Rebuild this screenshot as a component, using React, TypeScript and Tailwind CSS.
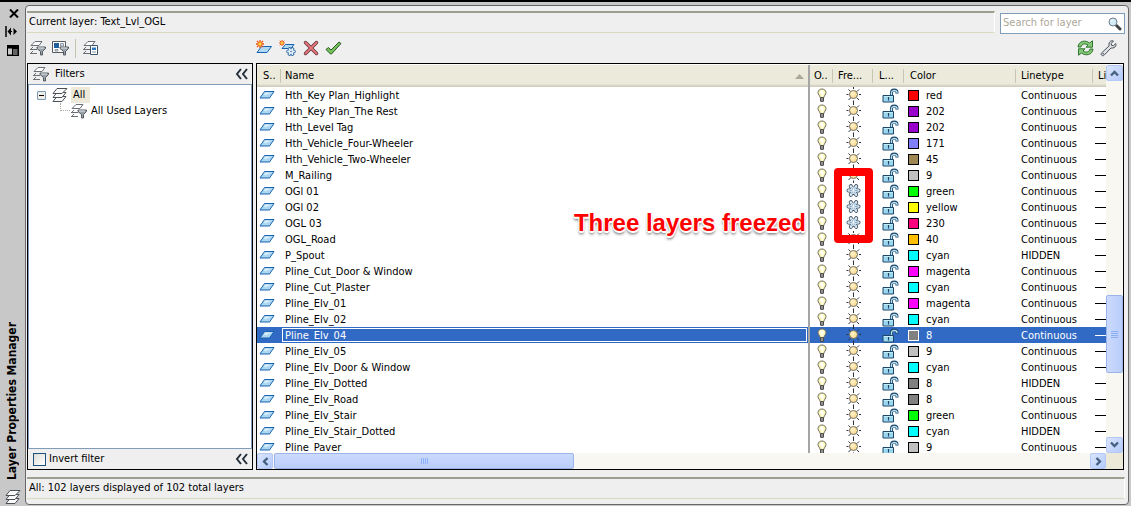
import type { ReactNode } from "react";

type Layer = { name: string; color: string; hex: string; hidden?: boolean; frozen?: boolean; selected?: boolean };

const layers: Layer[] = [
  { name: "Hth_Key Plan_Highlight", color: "red", hex: "#ff0000" },
  { name: "Hth_Key Plan_The Rest", color: "202", hex: "#9900cc" },
  { name: "Hth_Level Tag", color: "202", hex: "#9900cc" },
  { name: "Hth_Vehicle_Four-Wheeler", color: "171", hex: "#7f7fff" },
  { name: "Hth_Vehicle_Two-Wheeler", color: "45", hex: "#9e8752" },
  { name: "M_Railing", color: "9", hex: "#c0c0c0" },
  { name: "OGl 01", color: "green", hex: "#00ff00", frozen: true },
  { name: "OGl 02", color: "yellow", hex: "#ffff00", frozen: true },
  { name: "OGL 03", color: "230", hex: "#ff007f", frozen: true },
  { name: "OGL_Road", color: "40", hex: "#ffbf00" },
  { name: "P_Spout", color: "cyan", hex: "#00ffff", hidden: true },
  { name: "Pline_Cut_Door & Window", color: "magenta", hex: "#ff00ff" },
  { name: "Pline_Cut_Plaster", color: "cyan", hex: "#00ffff" },
  { name: "Pline_Elv_01", color: "magenta", hex: "#ff00ff" },
  { name: "Pline_Elv_02", color: "cyan", hex: "#00ffff" },
  { name: "Pline_Elv_04", color: "8", hex: "#808080", selected: true },
  { name: "Pline_Elv_05", color: "9", hex: "#c0c0c0" },
  { name: "Pline_Elv_Door & Window", color: "cyan", hex: "#00ffff" },
  { name: "Pline_Elv_Dotted", color: "8", hex: "#808080", hidden: true },
  { name: "Pline_Elv_Road", color: "8", hex: "#808080" },
  { name: "Pline_Elv_Stair", color: "green", hex: "#00ff00" },
  { name: "Pline_Elv_Stair_Dotted", color: "cyan", hex: "#00ffff", hidden: true },
  { name: "Pline_Paver", color: "9", hex: "#c0c0c0" },
];

function SheetIcon() {
  return (
    <svg width="16" height="8" viewBox="0 0 16 8" className="block">
      <path d="M5.5 .5H15L10.5 7H1Z" fill="#add5ee" stroke="#1463b4" />
      <path d="M6.5 1.5H12L8 4H4.5Z" fill="#d6ebf8" />
    </svg>
  );
}

function BulbIcon() {
  return (
    <svg width="10" height="15" viewBox="0 0 10 15" className="block">
      <path d="M5 1C2.700 1 1 2.500 1 4.700 1 6.700 3 7.500 3 9.500H7C7 7.500 9 6.700 9 4.700 9 2.500 7.300 1 5 1Z" fill="#fdf8bf" stroke="#716c58" />
      <path d="M3 2.500H6.500V6L5.500 8.500H4.500V6L3 5Z" fill="#fffef0" />
      <path d="M3 9.500H7V13L6 14H4L3 13Z" fill="#4c4c4c" />
      <path d="M4.500 10H5.500V13H4.500Z" fill="#d4d4d4" />
    </svg>
  );
}

function SunIcon() {
  return (
    <svg width="16" height="16" viewBox="0 0 16 16" className="block">
      <path d="M7.500 0V2M7.500 13.500V16M.5 7.500H2.500M13 7.500H15M2.500 2.500L4.500 4.500M11 11L13 13M2.500 13L4.500 11M11 4.500L13 2.500" stroke="#2e3238" />
      <circle cx="7.500" cy="7.500" r="4" fill="#fbe2a0" stroke="#6e6a60" />
      <circle cx="6.500" cy="6.500" r="2" fill="#fff0c4" />
    </svg>
  );
}

function SnowIcon() {
  return (
    <svg width="16" height="16" viewBox="0 0 16 16" className="block">
      <path d="M2.500 7.500H12.500M4.800 3.200L10.200 11.800M10.200 3.200L4.800 11.800" stroke="#3c4b5a" strokeWidth="4" strokeLinecap="round" />
      <path d="M2.500 7.500H12.500M4.800 3.200L10.200 11.800M10.200 3.200L4.800 11.800" stroke="#d9ebf7" strokeWidth="2.400" strokeLinecap="round" />
      <circle cx="7.500" cy="7.500" r="3.200" fill="#d9ebf7" />
      <path d="M3.500 7.500H11.500M5.500 4.400L9.500 10.600M9.500 4.400L5.500 10.600" stroke="#7d9fbd" strokeWidth=".9" />
      <circle cx="7.500" cy="7.500" r="1.200" fill="#fff" />
    </svg>
  );
}

function LockIcon() {
  return (
    <svg width="17" height="15" viewBox="0 0 17 15" className="block">
      <path d="M9.500 7.500V4.500C9.500 1.200 15 1.200 15 4.500V5.500" fill="none" stroke="#1d4668" strokeWidth="3" />
      <path d="M9.500 8V4.500C9.500 1.800 15 1.800 15 4.500V5" fill="none" stroke="#b4e0f4" strokeWidth="1.300" />
      <path d="M1 7.500H11.500V14H1Z" fill="#9bd8f0" stroke="#1d4668" />
      <path d="M2 8.500H10.500" stroke="#c8ecf8" />
      <path d="M6.500 9V12.500" stroke="#1d4668" strokeWidth="1.200" />
    </svg>
  );
}

function LayersIcon() {
  return (
    <svg width="16" height="16" viewBox="0 0 16 16" className="block">
      <g fill="#fafafa" stroke="#4c5157">
        <path d="M5 9.500L1 14.500H10L14 9.500Z" />
        <path d="M5 5.500L1 10.500H10L14 5.500Z" />
        <path d="M5 1.500L1 6.500H10L15 1.500Z" />
      </g>
    </svg>
  );
}

function Lines() {
  return (
    <g fill="none" stroke="#6a6f75">
      <path d="M2 5.500L6 1.500H13L10 5.500Z" fill="#fff" />
      <path d="M1 9.500H8M4 7L1.500 9.500M1 13.500H8M4 11L1.500 13.500" />
    </g>
  );
}

function Funnel() {
  return (
    <g>
      <path d="M8 7H16.500V8.500L13.500 11.500V15H11.500V11.500L8 8.500Z" fill="#9aa2aa" stroke="#4a5056" strokeWidth=".9" />
      <path d="M9 8H15" stroke="#dfe4e8" />
    </g>
  );
}

function FilterIcon() {
  return (
    <svg width="17" height="16" viewBox="0 0 17 16" className="block">
      <Lines />
      <Funnel />
    </svg>
  );
}

function GroupFilterIcon() {
  return (
    <svg width="17" height="16" viewBox="0 0 17 16" className="block">
      <path d="M.5 1.500H13.500V12.500H.5Z" fill="#fff" stroke="#555a60" />
      <path d="M2 3H7V8H2Z" fill="#1e5f9e" />
      <path d="M8.500 3.500H11.500V6H8.500ZM3 9.500H6V11H3Z" fill="#d8e4ee" stroke="#7a8692" strokeWidth=".8" />
      <Funnel />
    </svg>
  );
}

function StatesIcon() {
  return (
    <svg width="17" height="16" viewBox="0 0 17 16" className="block">
      <Lines />
      <path d="M9.500 5.500H15.500V14.500H8.500V5.500Z" fill="#fff" stroke="#3f5468" />
      <path d="M10 7.500H14V10H10Z" fill="#2b78c0" />
      <path d="M10 12H14" stroke="#8695a4" />
    </svg>
  );
}

function Burst() {
  return (
    <g>
      <path d="M4 0V8M0 4H8M1 1L7 7M1 7L7 1" stroke="#e8501c" strokeWidth="1.300" />
      <circle cx="4" cy="4" r="2" fill="#ffdc4a" stroke="#f0801c" />
    </g>
  );
}

function NewLayerIcon() {
  return (
    <svg width="17" height="16" viewBox="0 0 17 16" className="block">
      <path d="M5.500 6.500H15.500L11 12.500H1Z" fill="#b3d9f0" stroke="#1463b4" />
      <Burst />
    </svg>
  );
}

function NewFrozenIcon() {
  return (
    <svg width="17" height="16" viewBox="0 0 17 16" className="block">
      <path d="M6.500 4.500H15L12 8.500H3Z" fill="#b3d9f0" stroke="#1463b4" />
      <g transform="scale(.75)">
        <Burst />
      </g>
      <path d="M9 11.500H15M10.500 9L13.500 14M13.500 9L10.500 14" stroke="#2f68a0" strokeWidth="3.600" strokeLinecap="round" />
      <path d="M9 11.500H15M10.500 9L13.500 14M13.500 9L10.500 14" stroke="#eaf5fc" strokeWidth="1.800" strokeLinecap="round" />
      <circle cx="12" cy="11.500" r=".8" fill="#2f68a0" />
    </svg>
  );
}

function DeleteIcon() {
  return (
    <svg width="16" height="16" viewBox="0 0 16 16" className="block">
      <path d="M2.500 2.500L13.500 13.500M13.500 2.500L2.500 13.500" stroke="#5c3238" strokeWidth="3.400" strokeLinecap="round" />
      <path d="M2.500 2.500L13.500 13.500M13.500 2.500L2.500 13.500" stroke="#e8747c" strokeWidth="1.900" strokeLinecap="round" />
    </svg>
  );
}

function CheckIcon() {
  return (
    <svg width="17" height="16" viewBox="0 0 17 16" className="block">
      <path d="M1 9.500L3.500 7.500L6 10L14 2L16 3.500L6.500 14H5.500Z" fill="#74c05c" stroke="#2c5a22" strokeLinejoin="round" />
    </svg>
  );
}

function RefreshIcon() {
  return (
    <svg width="17" height="16" viewBox="0 0 17 16" className="block">
      <g fill="#86c878" stroke="#206a1e" strokeWidth=".9" strokeLinejoin="round">
        <path d="M1 7C1.500 1 8.500-.5 12.500 3L15.500 .8V7.200H9L11 5C8 3 4.500 4 4 7Z" />
        <path d="M16 9C15.500 15 8.500 16.300 4.500 13L1.500 15.200V8.800H8L6 11C9 13 12.500 12 13 9Z" />
      </g>
    </svg>
  );
}

function WrenchIcon() {
  return (
    <svg width="17" height="17" viewBox="0 0 17 17" className="block">
      <path d="M13.500 1C11.500.3 9 1.300 9 4 9 5 9.200 5.500 9 6L1.500 13C.3 14.800 2.500 16.600 4 15.300L11 8C12 8 13.500 8.300 15 7 16 6 16.200 4.700 15.800 3.500L13.500 5.700 11.500 5.300 11.300 3.300Z" fill="#dfe3e8" stroke="#4a5058" strokeLinejoin="round" />
      <circle cx="3.200" cy="13.800" r=".8" fill="#4a5058" />
    </svg>
  );
}

function SearchIcon() {
  return (
    <svg width="14" height="14" viewBox="0 0 14 14" className="block">
      <path d="M8.500 8.500L12 12" stroke="#3f4246" strokeWidth="3" strokeLinecap="round" />
      <circle cx="5" cy="5" r="4" fill="#d4ebf8" stroke="#70808e" />
      <path d="M3 5C3 3.800 3.800 3 5 3" stroke="#fff" fill="none" />
    </svg>
  );
}

function CollapseIcon() {
  return (
    <svg width="13" height="12" viewBox="0 0 13 12" className="block">
      <path d="M6 1L2 6L6 11M12 1L8 6L12 11" fill="none" stroke="#26303c" strokeWidth="2" />
    </svg>
  );
}

function Chevron({ d }: { d: string }) {
  return (
    <svg width="9" height="9" viewBox="0 0 9 9" className="block">
      <path d={d} fill="none" stroke="#45607f" strokeWidth="2.300" />
    </svg>
  );
}

function IconButton({ label, children }: { label: string; children: ReactNode }) {
  return (
    <button type="button" aria-label={label} className="flex h-5 w-[17px] shrink-0 items-center justify-center">
      {children}
    </button>
  );
}

function ScrollButton({ label, d, className }: { label: string; d: string; className: string }) {
  return (
    <button
      type="button"
      aria-label={label}
      className={`flex shrink-0 items-center justify-center rounded-xs border border-[#b4c8f6] bg-linear-to-br from-[#dbe5fe] to-[#b4cafb] ${className}`}
    >
      <Chevron d={d} />
    </button>
  );
}

const headings = [
  { text: "S..", pad: "pl-[6px]" },
  { text: "Name", pad: "pl-1" },
  { text: "O..", pad: "pl-1" },
  { text: "Fre...", pad: "pl-[5px]" },
  { text: "L...", pad: "pl-[6px]" },
  { text: "Color", pad: "pl-[6px]" },
  { text: "Linetype", pad: "pl-[5px]" },
  { text: "Li", pad: "pl-[5px]" },
];

function LayerRow({ layer }: { layer: Layer }) {
  return (
    <tr className={layer.selected ? "h-4 bg-[#316ac5] text-white" : "h-4"}>
      <td className="p-0 pl-[2px]"><SheetIcon /></td>
      <td className="p-0">
        <div className={layer.selected ? "mx-px h-[14px] truncate border border-white pl-[2px] leading-[14px]" : "truncate pl-1 pt-[2px] leading-[14px]"}>
          {layer.name}
        </div>
      </td>
      <td className="border-l-2 border-[#a5a5a5] p-0 pl-[7px]"><BulbIcon /></td>
      <td className="p-0 pl-[13px]">{layer.frozen ? <SnowIcon /> : <SunIcon />}</td>
      <td className="p-0 pl-[9px]"><LockIcon /></td>
      <td className="p-0 pl-1">
        <div className="flex h-4 items-center gap-[7px]">
          <span
            className={layer.selected ? "size-[11px] border border-white" : "size-[11px] border border-black"}
            style={{ backgroundColor: layer.hex }}
          />
          <span className="pt-[2px] leading-[14px]">{layer.color}</span>
        </div>
      </td>
      <td className="p-0 pl-[5px] pt-[2px] leading-[14px]">{layer.hidden ? "HIDDEN" : "Continuous"}</td>
      <td className="p-0 pl-[2px]">
        <div className={layer.selected ? "h-px bg-white" : "h-px bg-black"} />
      </td>
    </tr>
  );
}

function LayerList() {
  return (
    <section className="flex min-w-0 flex-1 flex-col border border-black bg-white pt-px">
      <div className="flex min-h-0 flex-1">
        <div className="relative min-w-0 flex-1 overflow-hidden">
          <table className="w-full table-fixed border-collapse text-left">
            <colgroup>
              <col className="w-6" />
              <col />
              <col className="w-6" />
              <col className="w-10" />
              <col className="w-[31px]" />
              <col className="w-28" />
              <col className="w-[77px]" />
              <col className="w-[13px]" />
            </colgroup>
            <thead>
              <tr className="h-[22px] bg-linear-to-b from-[#ebeadb] from-85% to-[#cbc7b8]">
                {headings.map((h, i) => (
                  <th key={h.text} className={`p-0 font-normal ${i === 2 ? "border-l-2 border-[#a5a5a5]" : ""}`}>
                    <div className={`flex h-[14px] items-center overflow-hidden whitespace-nowrap leading-[14px] ${h.pad} ${i === 1 || i === 7 ? "" : "border-r border-[#c7c5b2]"}`}>
                      {h.text}
                      {i === 1 && (
                        <svg width="9" height="5" viewBox="0 0 9 5" className="ml-auto mr-1 block">
                          <path d="M4.500 0L9 5H0Z" fill="#aca899" />
                        </svg>
                      )}
                    </div>
                  </th>
                ))}
              </tr>
            </thead>
            <tbody>
              {layers.map((l) => (
                <LayerRow key={l.name} layer={l} />
              ))}
            </tbody>
          </table>
          <div className="absolute right-[233px] top-[103px] h-[75px] w-[39px] rounded border-8 border-[#fe0000]" />
          <div className="absolute right-[300px] top-[144px] whitespace-nowrap font-['Liberation_Sans',Arial,sans-serif] text-2xl leading-7 font-bold text-[#fe0000] [text-shadow:1px_1px_0_#fff,-1px_-1px_0_#fff,1px_-1px_0_#fff,-1px_1px_0_#fff,0_2px_0_#fff,0_3px_3px_#555]">
            Three layers freezed
          </div>
        </div>
        <div className="flex w-[17px] shrink-0 flex-col bg-[#f8f7f2]">
          <ScrollButton label="Scroll up" d="M1 6.500L4.500 3L8 6.500" className="h-4" />
          <div className="flex-[215]" />
          <div className="flex flex-[76] flex-col items-center justify-center gap-px rounded-xs border border-[#9ab3e8] bg-linear-to-r from-[#cbdafd] to-[#b9cdfb]">
            <span className="h-px w-[7px] bg-[#8cb0f8]" />
            <span className="h-px w-[7px] bg-[#8cb0f8]" />
            <span className="h-px w-[7px] bg-[#8cb0f8]" />
            <span className="h-px w-[7px] bg-[#8cb0f8]" />
          </div>
          <div className="flex-[64]" />
          <ScrollButton label="Scroll down" d="M1 2.500L4.500 6L8 2.500" className="h-4" />
        </div>
      </div>
      <div className="flex h-4 shrink-0 bg-[#f8f7f2]">
        <ScrollButton label="Scroll left" d="M6.500 1L3 4.500L6.500 8" className="w-4" />
        <div className="ml-px flex flex-[299] items-center justify-center gap-px rounded-xs border border-[#9ab3e8] bg-linear-to-b from-[#cbdafd] to-[#b9cdfb]">
          <span className="h-[6px] w-px bg-[#8cb0f8]" />
          <span className="h-[6px] w-px bg-[#8cb0f8]" />
          <span className="h-[6px] w-px bg-[#8cb0f8]" />
          <span className="h-[6px] w-px bg-[#8cb0f8]" />
        </div>
        <div className="flex-[517]" />
        <ScrollButton label="Scroll right" d="M2.500 1L6 4.500L2.500 8" className="w-4" />
        <div className="w-[17px] shrink-0 bg-[#ece9d8]" />
      </div>
    </section>
  );
}

function FilterPanel() {
  return (
    <aside className="flex w-[226px] shrink-0 flex-col border border-black">
      <header className="flex h-5 shrink-0 items-center pl-1 pr-1">
        <FilterIcon />
        <h2 className="ml-[6px] flex-1">Filters</h2>
        <button type="button" aria-label="Collapse filters"><CollapseIcon /></button>
      </header>
      <ul className="flex-1 border border-[#7f9db9] bg-white pt-[2px]">
        <li>
          <div className="flex h-4 items-center pl-2">
            <button type="button" aria-label="Collapse All" className="mr-[6px] flex size-[9px] items-center justify-center rounded-[1px] border border-[#7898b5] bg-[#f0eee6]">
              <span className="h-px w-[5px] bg-black" />
            </button>
            <LayersIcon />
            <span className="ml-[3px] bg-[#ece9d8] pl-[2px] pr-[5px] leading-4">All</span>
          </div>
          <ul>
            <li className="flex h-4 items-center pl-[31px]">
              <span className="h-2 w-[10px] self-start border-b border-l border-dotted border-[#aca899]" />
              <FilterIcon />
              <span className="ml-1 leading-4">All Used Layers</span>
            </li>
          </ul>
        </li>
      </ul>
      <footer className="flex h-5 shrink-0 items-center pl-[5px] pr-1">
        <label className="flex flex-1 items-center gap-[3px]">
          <input type="checkbox" className="size-[13px] appearance-none border border-[#1c5180] bg-linear-to-br from-[#dcdcd7] to-white" />
          Invert filter
        </label>
        <button type="button" aria-label="Collapse panel"><CollapseIcon /></button>
      </footer>
    </aside>
  );
}

export default function App() {
  return (
    <div className="flex h-screen min-h-[300px] overflow-hidden border-t-2 border-black bg-[#c8c8c8] pb-px pr-[2px] pt-[3px] font-['DejaVu_Sans_Condensed','DejaVu_Sans',sans-serif] text-[11px] text-black">
      <div className="flex w-[25px] shrink-0 flex-col items-center pt-[3px]">
        <button type="button" aria-label="Close" className="ml-[2px] flex h-[11px] items-center">
          <svg width="10" height="9" viewBox="0 0 10 9" className="block">
            <path d="M1 .5L9 8.500M9 .5L1 8.500" stroke="#000" strokeWidth="2" />
          </svg>
        </button>
        <button type="button" aria-label="Auto-hide" className="mr-[2px] mt-[7px]">
          <svg width="13" height="11" viewBox="0 0 13 11" className="block">
            <path d="M1 0V11" stroke="#000" strokeWidth="1.500" />
            <path d="M6 1.500L2.500 5.500L6 9.500Z" />
            <path d="M3 5.500H7" stroke="#000" />
            <path d="M8.500 2L12 5.500L8.500 9Z" />
          </svg>
        </button>
        <button type="button" aria-label="Properties" className="mt-2">
          <svg width="12" height="11" viewBox="0 0 12 11" className="block">
            <path d="M0 0H12V11H0Z" />
            <path d="M1 3.500H5V9.500H1ZM6 4.500H10.500V5.500H6ZM6 6.500H10.500V7.500H6ZM6 8.500H10.500V9.500H6Z" fill="#c8c8c8" />
          </svg>
        </button>
        <h1 className="mb-[9px] mr-[2px] mt-auto rotate-180 whitespace-nowrap text-xs leading-4 font-bold [writing-mode:vertical-rl]">
          Layer Properties Manager
        </h1>
        <LayersIcon />
      </div>

      <main className="flex min-w-0 flex-1 flex-col rounded-[4px] border border-[#666] bg-[#efefef] pb-[5px] pl-px pr-[3px] pt-[5px]">
        <div className="flex shrink-0 items-start gap-[5px]">
          <div className="h-[22px] flex-1 border-t-2 border-r border-b border-t-[#9f9e92] border-r-white border-b-[#dcd9c2] pl-[2px] leading-[17px]">
            Current layer: Text_Lvl_OGL
          </div>
          <label className="mt-[2px] flex h-[21px] w-[125px] items-center border border-[#7f9db9] bg-white px-[2px]">
            <input type="search" aria-label="Search for layer" placeholder="Search for layer" className="min-w-0 flex-1 outline-none placeholder:text-[#aca899]" />
            <SearchIcon />
          </label>
        </div>

        <div className="flex h-[29px] shrink-0 items-center gap-[6px] pb-px pl-[2px] pr-2">
          <div className="flex w-[221px] items-center gap-[6px]">
            <IconButton label="New property filter"><FilterIcon /></IconButton>
            <IconButton label="New group filter"><GroupFilterIcon /></IconButton>
            <span className="h-[19px] w-px bg-[#c5c2ab]" />
            <IconButton label="Layer states manager"><StatesIcon /></IconButton>
          </div>
          <IconButton label="New layer"><NewLayerIcon /></IconButton>
          <IconButton label="New layer frozen in all viewports"><NewFrozenIcon /></IconButton>
          <IconButton label="Delete layer"><DeleteIcon /></IconButton>
          <IconButton label="Set current"><CheckIcon /></IconButton>
          <span className="flex-1" />
          <IconButton label="Refresh"><RefreshIcon /></IconButton>
          <IconButton label="Settings"><WrenchIcon /></IconButton>
        </div>

        <div className="flex min-h-0 flex-1 gap-[3px] pr-px">
          <FilterPanel />
          <LayerList />
        </div>

        <div className="mt-[7px] h-[22px] shrink-0 border-t-2 border-r border-b border-t-[#9f9e92] border-r-white border-b-[#dcd9c2] pl-[2px] leading-[17px]">
          All: 102 layers displayed of 102 total layers
        </div>
      </main>
    </div>
  );
}
